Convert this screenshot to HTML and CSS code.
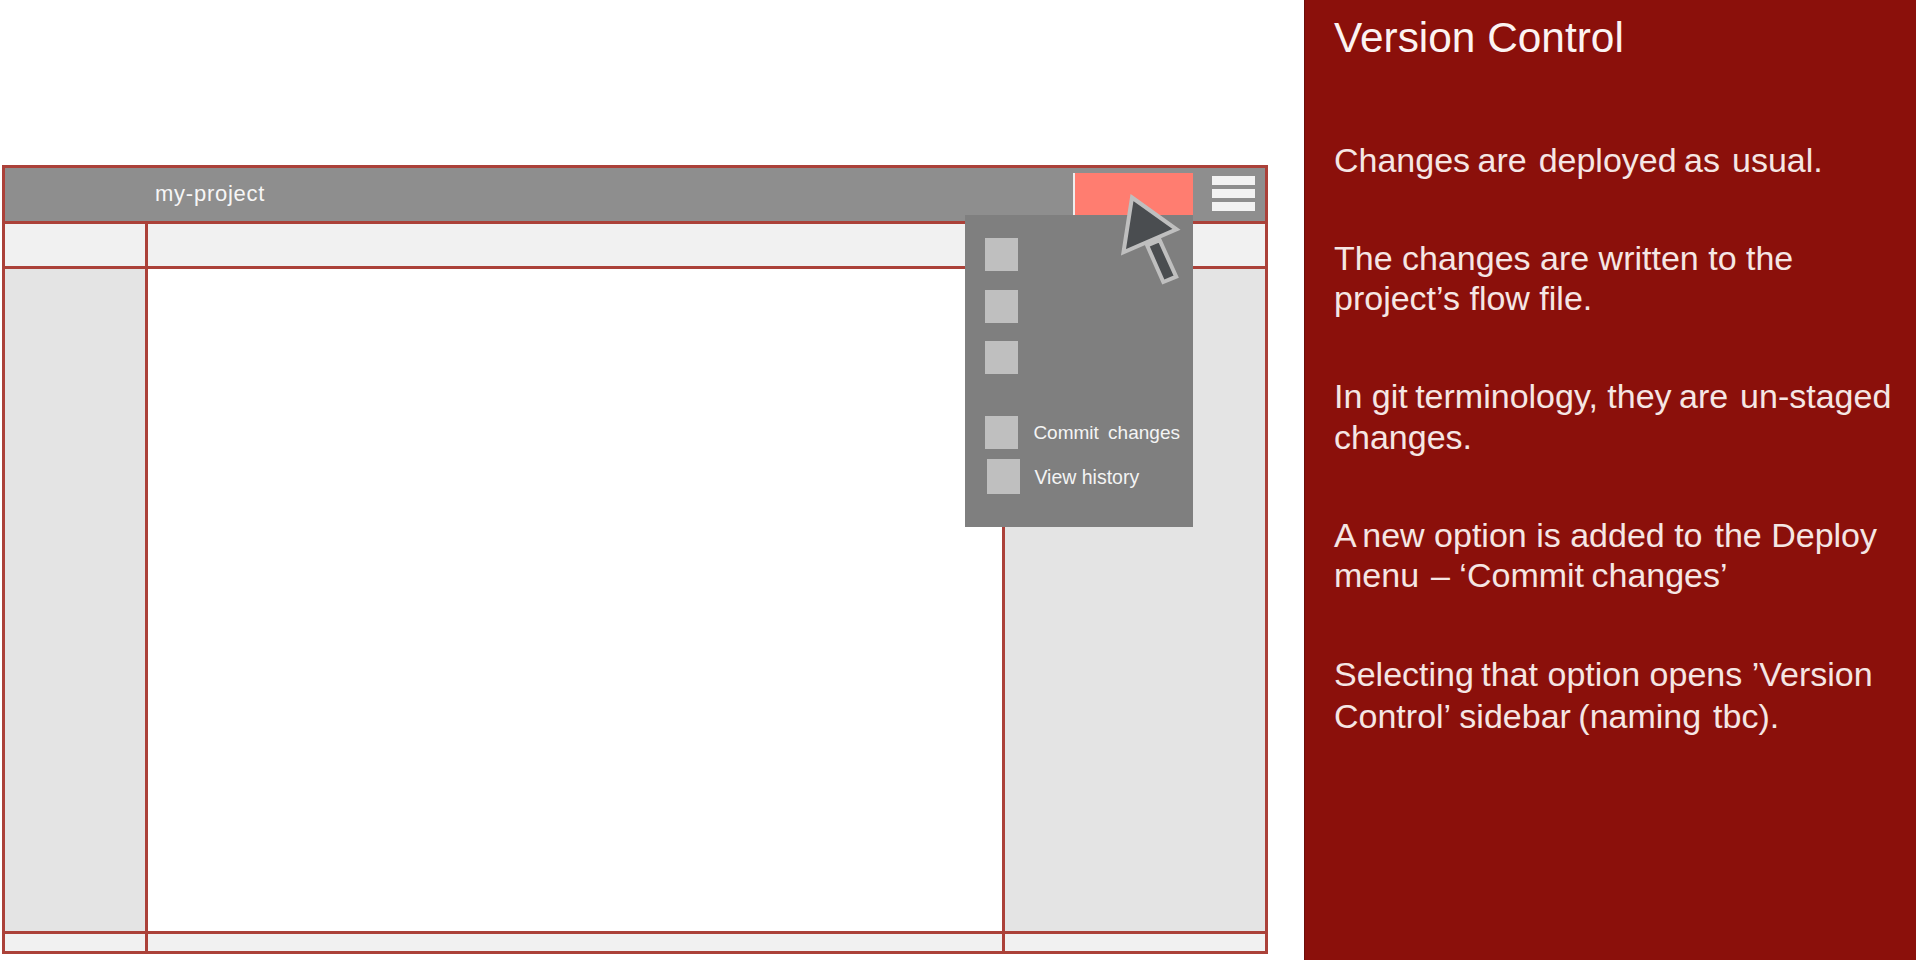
FILE: index.html
```html
<!DOCTYPE html>
<html lang="en">
<head>
<meta charset="utf-8">
<title>Version Control</title>
<link rel="stylesheet" href="styles.css">
</head>
<body>
<div class="slide">
  <main class="stage">
    <div class="window">
      <header class="header">
        <span class="project">my-project</span>
        <div class="deploy"></div>
        <div class="burger"><i></i><i></i><i></i></div>
      </header>
      <div class="tab"></div>
      <div class="tabs"></div>
      <div class="palette"></div>
      <div class="canvas"></div>
      <div class="sidebar"></div>
      <div class="foot"></div>
      <div class="foot"></div>
      <div class="foot"></div>
    </div>
    <div class="menu">
      <div class="item"><i class="box"></i></div>
      <div class="item"><i class="box"></i></div>
      <div class="item"><i class="box"></i></div>
      <div class="item commit"><i class="box"></i><span class="label">Commit changes</span></div>
      <div class="item history"><i class="box"></i><span class="label">View history</span></div>
    </div>
    <svg class="cursor" viewBox="1118 190 66 100" width="66" height="100">
      <path d="M1132 197.5L1176.5 229.3L1123.5 252.3Z"/>
      <path d="M1147.2 245.5L1163.3 282L1176.2 276.7L1159.7 240.2Z"/>
    </svg>
  </main>
  <aside class="notes">
    <h1 class="title">Version Control</h1>
    <p class="note p1"><span class="line"><span class="tight">Changes </span><span class="wide">are </span><span class="tight">deployed </span><span class="wide">as </span>usual.</span></p>
    <p class="note p2"><span class="line">The changes are written to the</span><span class="line">project’s flow file.</span></p>
    <p class="note p3"><span class="line">In <span class="tight">git </span>terminology, <span class="tight">they </span><span class="wide">are </span>un-staged</span><span class="line">changes.</span></p>
    <p class="note p4"><span class="line"><span class="tight">A </span>new option is added <span class="wide">to </span>the Deploy</span><span class="line"><span class="wide">menu </span>– <span class="tight">‘Commit </span>changes’</span></p>
    <p class="note p5"><span class="line"><span class="tight">Selecting </span>that option opens ’Version</span><span class="line">Control’ <span class="tight">sidebar </span><span class="wide">(naming </span>tbc).</span></p>
  </aside>
</div>
</body>
</html>
```
FILE: styles.css
```css
* { box-sizing: border-box; }
body { margin: 0; background: #fff; font-family: "Liberation Sans", Arial, sans-serif; }
.slide { display: flex; width: 1916px; height: 960px; overflow: hidden; }
.stage { position: relative; width: 1304px; padding: 165px 0 0 2px; }
.window {
  display: grid;
  width: 1266px;
  height: 789px;
  padding: 3px;
  gap: 3px;
  grid-template-columns: 140px 854px 1fr;
  grid-template-rows: 53px 42px 662px 17px;
  background: #ab4139;
}
.header { grid-column: 1 / 4; display: flex; align-items: flex-start; background: #8e8e8e; }
.project { flex: 1; padding: 12px 0 0 150px; font-size: 22px; line-height: 28px; letter-spacing: 0.75px; color: #f6f6f6; }
.deploy { width: 120px; height: 42px; margin-top: 5px; border-left: 2px solid #eee; background: #ff7d70; }
.burger { display: flex; flex-direction: column; gap: 4px; width: 43px; margin: 8px 10px 0 19px; }
.burger i { height: 9px; background: #f2f2f2; }
.tab { background: #f1f1f1; }
.tabs { grid-column: 2 / 4; background: #f1f1f1; }
.palette, .sidebar { background: #e4e4e4; }
.canvas { background: #fff; }
.foot { background: #f1f1f1; }
.menu {
  position: absolute;
  left: 965px;
  top: 215px;
  width: 228px;
  height: 312px;
  padding: 23px 0 0 20.4px;
  background: #7f7f7f;
}
.item { display: flex; align-items: center; gap: 15px; height: 33px; margin-bottom: 18.5px; }
.box { flex: none; width: 33px; height: 33px; background: #bfbfbf; }
.commit { margin: 41.5px 0 10px; }
.history { height: 35px; padding-left: 2px; gap: 14px; }
.history .box { height: 35px; }
.label { padding-top: 2px; font-size: 19.5px; color: #f4f4f4; white-space: nowrap; }
.commit .label { font-size: 19px; word-spacing: 4px; }
.cursor { position: absolute; left: 1118px; top: 190px; fill: #4a4d50; stroke: #bfbfbf; stroke-width: 4; }
.notes { flex: 1; padding: 14px 0 0 29px; background: #8b100b; border-left: 1px solid #6c0e0a; color: #f5e6e4; }
.title { margin: 0 0 77.5px; font-size: 42.4px; line-height: 48px; font-weight: 400; color: #fcf3f2; }
.note { margin: 0; font-size: 34px; line-height: 40px; white-space: nowrap; }
.line { display: block; width: max-content; }
.tight { word-spacing: -2px; }
.wide { word-spacing: 2.5px; }
.p2 { margin-top: 58.5px; }
.p3 { margin-top: 57.7px; line-height: 41px; }
.p4 { margin-top: 57.8px; }
.p5 { margin-top: 57.2px; line-height: 42.5px; }
```
